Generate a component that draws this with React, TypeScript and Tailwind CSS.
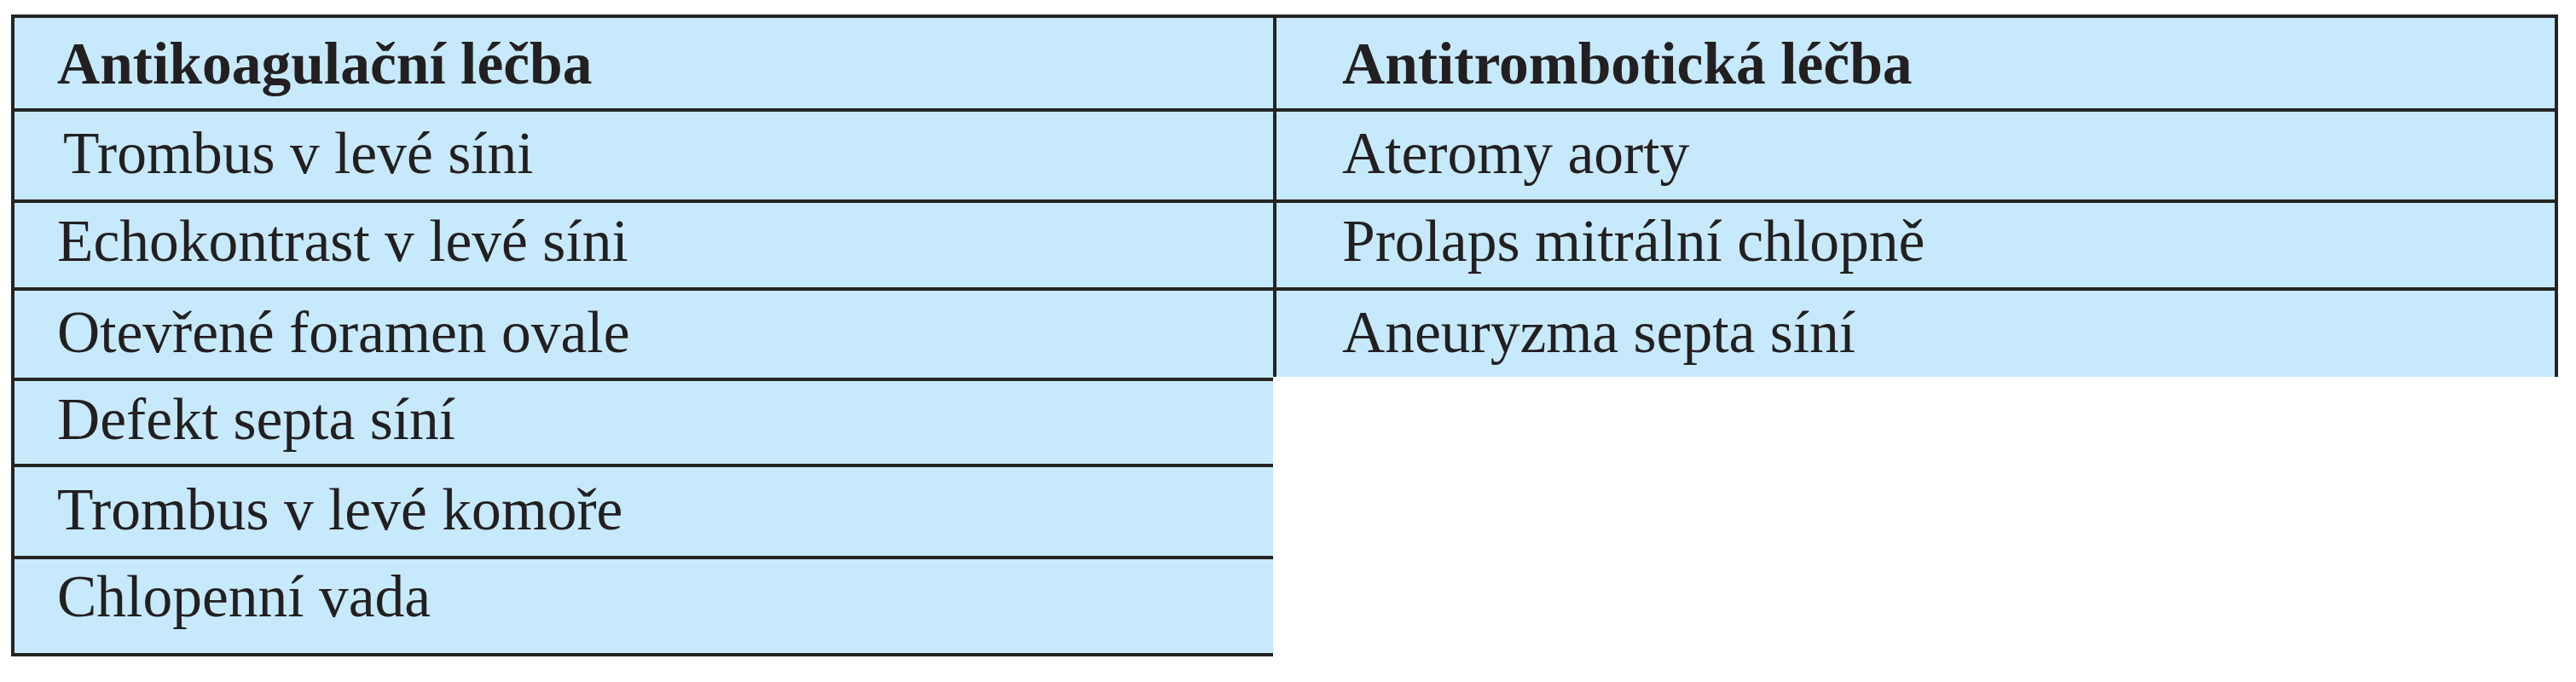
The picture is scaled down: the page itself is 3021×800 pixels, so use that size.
import React from "react";

type Row = {
  left: string;
  right?: string;
  leftCls: string;
  rightCls?: string;
  textPt: string;
  leftPad?: string;
  bold?: boolean;
};

const rows: Row[] = [
  {
    left: "Antikoagulační léčba",
    right: "Antitrombotická léčba",
    leftCls: "h-[110px] border-b-4",
    rightCls: "h-[110px] border-b-4",
    textPt: "pt-[19px]",
    bold: true,
  },
  {
    left: "Trombus v levé síni",
    right: "Ateromy aorty",
    leftCls: "h-[107px] border-b-4",
    rightCls: "h-[107px] border-b-4",
    textPt: "pt-[14px]",
    leftPad: "pl-[57px]",
  },
  {
    left: "Echokontrast v levé síni",
    right: "Prolaps mitrální chlopně",
    leftCls: "h-[103px] border-b-4",
    rightCls: "h-[103px] border-b-4",
    textPt: "pt-[10px]",
  },
  {
    left: "Otevřené foramen ovale",
    right: "Aneuryzma septa síní",
    leftCls: "h-[106px] border-b-4",
    rightCls: "h-[101px]",
    textPt: "pt-[14px]",
  },
  {
    left: "Defekt septa síní",
    leftCls: "h-[101px] border-b-4",
    textPt: "pt-[10px]",
  },
  {
    left: "Trombus v levé komoře",
    leftCls: "h-[108px] border-b-4",
    textPt: "pt-[15px]",
  },
  {
    left: "Chlopenní vada",
    leftCls: "h-[114px] border-b-4",
    textPt: "pt-[9px]",
  },
];

export default function App() {
  return (
    <div className="w-[3021px] h-[800px] bg-white pt-[17px] pl-[13px] font-['Liberation_Serif',_'Times_New_Roman',_serif] text-[69.5px] leading-none text-[#231f20]">
      <div className="w-[2987px] border-t-4 border-[#242424]">
        {rows.map((r, i) => (
          <div key={i} className="flex items-start">
            <div
              className={`w-[1480px] shrink-0 border-l-4 border-[#242424] bg-[#c6e9fb] ${r.leftCls} ${r.textPt} ${r.leftPad ?? "pl-[50px]"} ${r.bold ? "font-bold" : ""}`}
            >
              {r.left}
            </div>
            {r.right !== undefined && (
              <div
                className={`w-[1507px] shrink-0 border-l-4 border-r-4 border-[#242424] bg-[#c6e9fb] pl-[77px] ${r.rightCls ?? ""} ${r.textPt} ${r.bold ? "font-bold" : ""}`}
              >
                {r.right}
              </div>
            )}
          </div>
        ))}
      </div>
    </div>
  );
}
